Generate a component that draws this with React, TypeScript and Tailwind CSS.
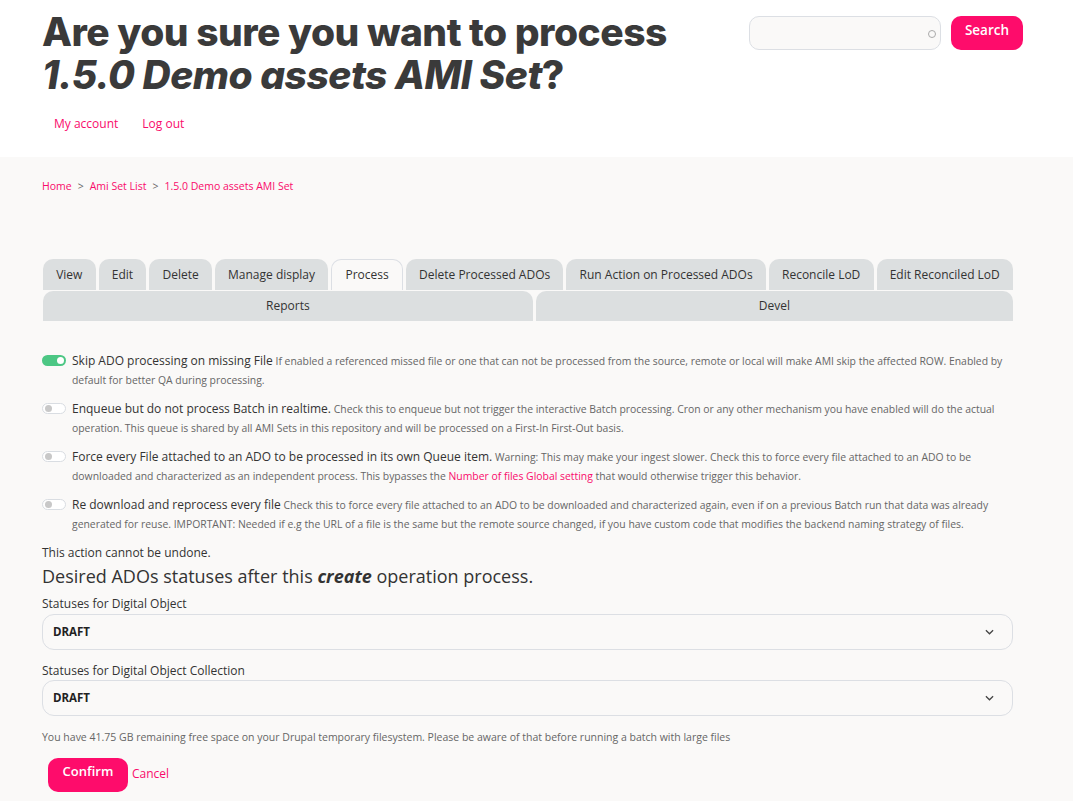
import React from "react";

const PINK = "text-[#f90b6b]";

function Toggle({ on }: { on?: boolean }) {
  return on ? (
    <span className="relative mt-[4px] inline-block h-[11px] w-[24px] shrink-0 rounded-full bg-[#4cc784]">
      <span className="absolute right-[2px] top-[2px] h-[7px] w-[7px] rounded-full bg-white" />
    </span>
  ) : (
    <span className="relative mt-[4px] inline-block h-[11px] w-[24px] shrink-0 rounded-full border border-[#d9dde2] bg-white">
      <span className="absolute left-[2px] top-[1px] h-[7px] w-[7px] rounded-full bg-[#c8c8c8]" />
    </span>
  );
}

function Row({ on, label, children }: { on?: boolean; label: string; children: React.ReactNode }) {
  return (
    <div className="flex gap-[6px]">
      <Toggle on={on} />
      <div className="text-[10.4px] leading-[19px] text-[#666]">
        <span className="text-[12px] text-[#333]">{label}</span> {children}
      </div>
    </div>
  );
}

function Select() {
  return (
    <div className="flex h-[36px] items-center justify-between rounded-[12px] border border-[#dcdfe4] bg-[#faf9f8] pl-[10px] pr-[18px]">
      <span className="text-[11.5px] font-bold text-[#222]">DRAFT</span>
      <svg width="9" height="6" viewBox="0 0 10 6" fill="none">
        <path d="M1 1l4 4 4-4" stroke="#444" strokeWidth="1.4" />
      </svg>
    </div>
  );
}

const tabs1 = [
  "View",
  "Edit",
  "Delete",
  "Manage display",
  "Process",
  "Delete Processed ADOs",
  "Run Action on Processed ADOs",
  "Reconcile LoD",
  "Edit Reconciled LoD",
];

export default function App() {
  return (
    <div className="min-h-[801px] bg-[#faf9f8] font-['Open_Sans',sans-serif] text-[#333]">
      <header className="bg-white px-[42px] pb-[24px] pt-[10px]">
        <div className="flex items-start justify-between pr-[8px]">
          <h1 className="font-['Inter',sans-serif] text-[39px] font-extrabold leading-[43px] tracking-[-0.5px] text-[#3a3a3a]">
            Are you sure you want to process
            <br />
            <em className="italic">1.5.0 Demo assets AMI Set</em>?
          </h1>
          <div className="mt-[6px] flex gap-[10px]">
            <div className="relative h-[34px] w-[192px] rounded-[10px] border border-[#dcdfe4] bg-[#faf9f8]">
              <span className="absolute right-[4px] top-[13px] h-[8px] w-[8px] rounded-full border-[1.5px] border-[#aaa]" />
            </div>
            <button className="h-[34px] w-[72px] rounded-[10px] bg-[#fe0c6b] pb-[6px] text-[13.5px] font-semibold text-white">
              Search
            </button>
          </div>
        </div>
        <nav className="mt-[19px] flex gap-[24px] pl-[12px] text-[12px] leading-[18px] text-[#f90b6b]">
          <a>My account</a>
          <a>Log out</a>
        </nav>
      </header>

      <main className="px-[42px] pt-[21px]">
        <div className="flex items-center gap-[6px] text-[10.5px] leading-[16px]">
          <a className={PINK}>Home</a>
          <span className="text-[#666]">&gt;</span>
          <a className={PINK}>Ami Set List</a>
          <span className="text-[#666]">&gt;</span>
          <a className={PINK}>1.5.0 Demo assets AMI Set</a>
        </div>

        <div className="mt-[65px] w-[971px] pl-[1px]">
          <div className="flex gap-[3px]">
            {tabs1.map((t) => (
              <div
                key={t}
                className={`flex h-[31px] grow items-center whitespace-nowrap rounded-t-[10px] px-[13px] text-[12px] text-[#333] ${
                  t === "Process"
                    ? "border border-b-0 border-[#dcdfe4] bg-[#faf9f8]"
                    : "bg-[#dcdfe0]"
                }`}
              >
                <span className="w-full text-center">{t}</span>
              </div>
            ))}
          </div>
          <div className="mt-[1px] flex gap-[3px]">
            <div className="flex h-[30px] grow items-center justify-center rounded-t-[10px] bg-[#dcdfe0] text-[12px]">
              Reports
            </div>
            <div className="flex h-[30px] grow items-center justify-center rounded-t-[10px] bg-[#dcdfe0] text-[12px]">
              Devel
            </div>
          </div>
        </div>

        <div className="mt-[30px] flex w-[971px] flex-col gap-[9px]">
          <Row on label="Skip ADO processing on missing File">
            If enabled a referenced missed file or one that can not be processed from the source, remote or local will
            make AMI skip the affected ROW. Enabled by default for better QA during processing.
          </Row>
          <Row label="Enqueue but do not process Batch in realtime.">
            Check this to enqueue but not trigger the interactive Batch processing. Cron or any other mechanism you have
            enabled will do the actual operation. This queue is shared by all AMI Sets in this repository and will be
            processed on a First-In First-Out basis.
          </Row>
          <Row label="Force every File attached to an ADO to be processed in its own Queue item.">
            Warning: This may make your ingest slower. Check this to force every file attached to an ADO to be
            downloaded and characterized as an independent process. This bypasses the{" "}
            <a className={PINK}>Number of files Global setting</a> that would otherwise trigger this behavior.
          </Row>
          <Row label="Re download and reprocess every file">
            Check this to force every file attached to an ADO to be downloaded and characterized again, even if on a
            previous Batch run that data was already generated for reuse. IMPORTANT: Needed if e.g the URL of a file is
            the same but the remote source changed, if you have custom code that modifies the backend naming strategy of
            files.
          </Row>
        </div>

        <div className="w-[971px]">
          <p className="mt-[10px] text-[12px] leading-[18px]">This action cannot be undone.</p>
          <h2 className="mt-[2px] text-[18px] leading-[25px] text-[#333]">
            Desired ADOs statuses after this <em className="font-bold">create</em> operation process.
          </h2>
          <label className="mt-[6px] block text-[12px] leading-[18px]">Statuses for Digital Object</label>
          <div className="mt-[1px]">
            <Select />
          </div>
          <label className="mt-[12px] block text-[12px] leading-[18px]">Statuses for Digital Object Collection</label>
          <div>
            <Select />
          </div>
          <p className="mt-[13px] text-[10.5px] leading-[16px] text-[#666]">
            You have 41.75 GB remaining free space on your Drupal temporary filesystem. Please be aware of that before
            running a batch with large files
          </p>
          <div className="mt-[13px] flex items-center gap-[4px] pl-[6px]">
            <button className="h-[34px] w-[80px] rounded-[10px] bg-[#fe0c6b] pb-[6px] text-[13px] font-semibold text-white">
              Confirm
            </button>
            <a className={`text-[12px] ${PINK} -mt-[2px]`}>Cancel</a>
          </div>
        </div>
      </main>
    </div>
  );
}
